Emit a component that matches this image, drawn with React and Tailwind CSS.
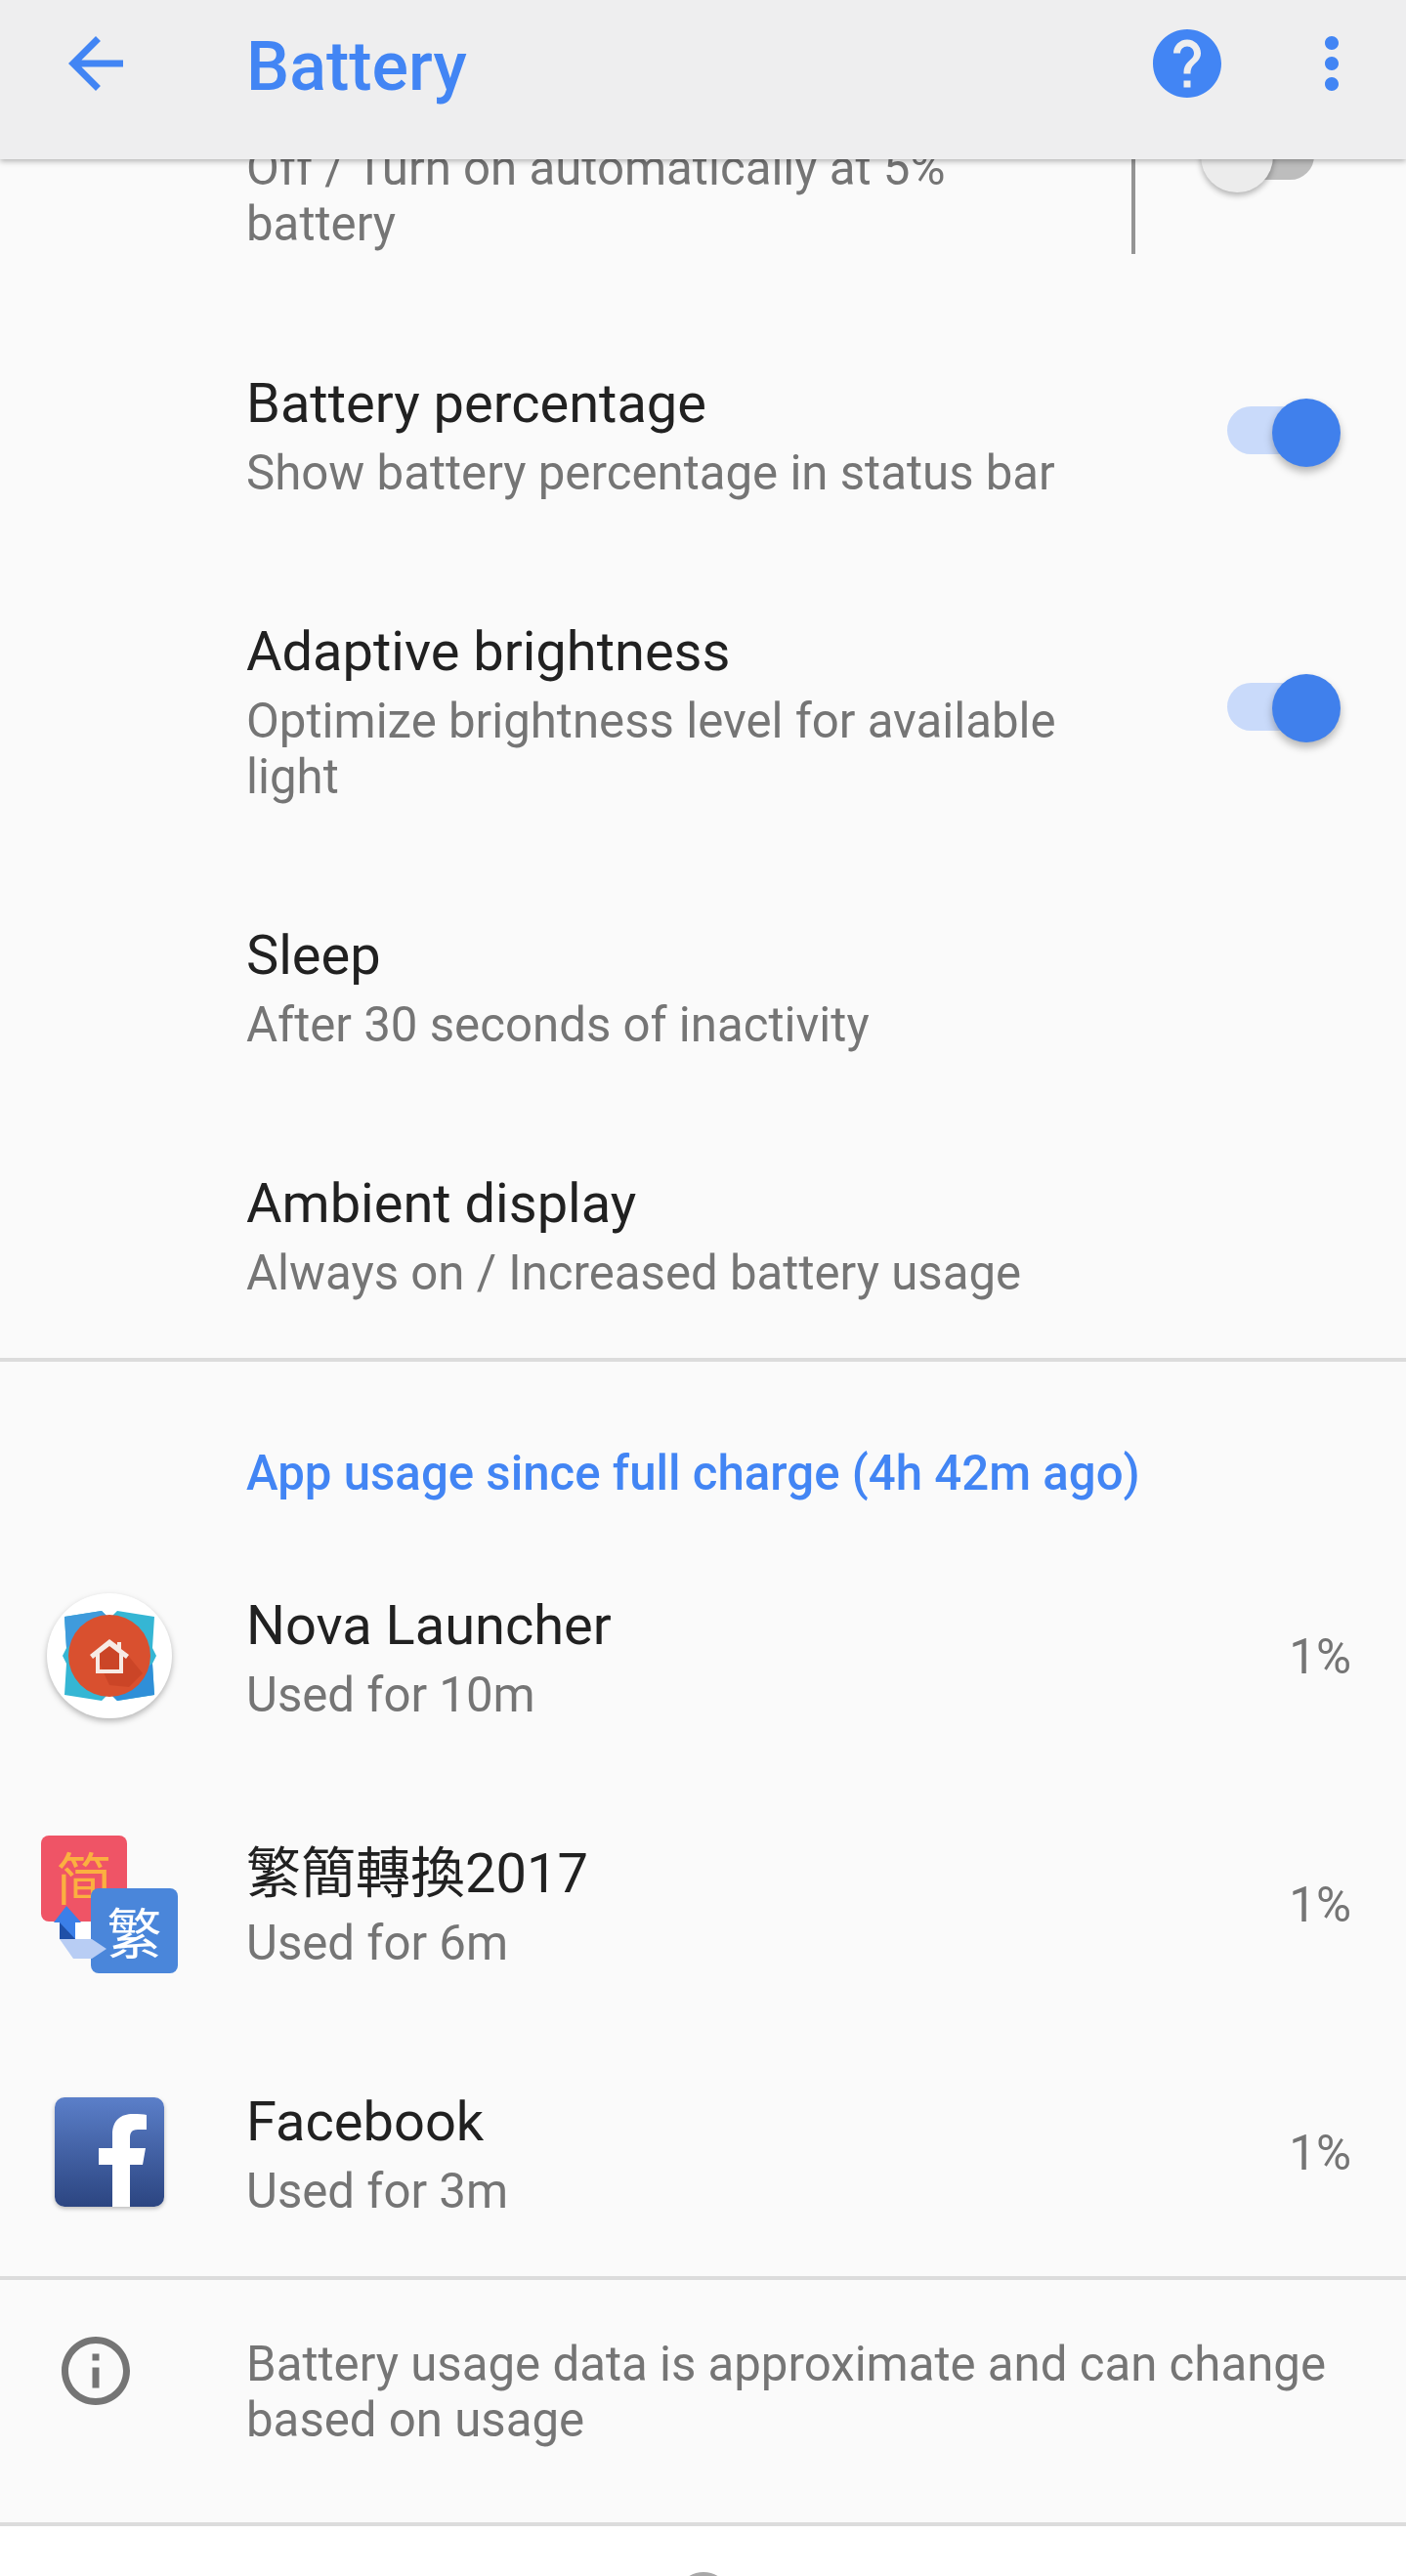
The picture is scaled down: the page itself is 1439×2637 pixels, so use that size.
const BLUE = "#4285f4";

function Toggle({ on }) {
  return (
    <div className={on ? "relative w-[116px] h-[70px] flex items-center mt-[-3px]" : "relative w-[116px] h-[70px] flex items-center"}>
      <div className={on ? "w-[95px] h-[49px] rounded-full bg-[#c9dafa]" : "w-[95px] h-[49px] rounded-full bg-[#bdbdbd] ml-[22px] mt-[2px]"} />
      <div
        className={
          on
            ? "absolute right-0 top-[2px] w-[70px] h-[70px] rounded-full bg-[#4080ec] shadow-[0_5px_9px_rgba(0,0,0,0.28)]"
            : "absolute left-0 top-0 w-[74px] h-[74px] rounded-full bg-[#ececec] shadow-[0_3px_6px_rgba(0,0,0,0.3)]"
        }
      />
    </div>
  );
}

function Row({ title, summary, right, icon, lines }) {
  return (
    <div className="flex items-center pt-[57px] pb-[55px]">
      <div className="w-[252px] shrink-0 flex justify-center pr-[28px] pt-[4px] h-0 items-center">{icon}</div>
      <div className="flex-1 min-w-0">
        {title && <div className="text-[56px] leading-[85px] text-[#212121]">{title}</div>}
        <div className="text-[49.2px] leading-[57px] text-[#757575]">
          {lines ? lines.map((l) => <div key={l}>{l}</div>) : summary}
        </div>
      </div>
      <div className="shrink-0 pr-[67px]">{right}</div>
    </div>
  );
}

function Percent() {
  return <div className="text-[49.2px] leading-[57px] text-[#757575] mr-[-11px] pt-[7px]">1%</div>;
}

function NovaIcon() {
  return (
    <svg width="140" height="140" viewBox="-4 -4 140 140" className="shrink-0 drop-shadow-[0_3px_3px_rgba(0,0,0,0.28)]">
      <circle cx="66" cy="66" r="64" fill="#fff" />
      <path d="M20 26 L58 20 L66 28 L74 20 L112 26 L110 58 L114 66 L110 74 L112 106 L74 112 L66 104 L58 112 L20 106 L22 74 L18 66 L22 58 Z" fill="#35b6d4" />
      <path d="M20 26 L58 20 L66 28 L22 58 Z" fill="#3f9bdc" />
      <path d="M112 106 L74 112 L66 104 L110 74 Z" fill="#2f8fd8" />
      <circle cx="66" cy="66" r="42" fill="#d9502f" />
      <path d="M50 62 L66 50 L82 62 L100 84 L86 98 L66 96 Z" fill="#cb4527" />
      <path d="M66 49 L46 65 L49 69 L66 56 L83 69 L86 65 L78 59 L78 52 L74 52 L74 55 Z" fill="#f7ebe5" />
      <path d="M52 66 V84 H80 V66 L76 63 V80 H56 V63 Z" fill="#f7ebe5" />
    </svg>
  );
}

function ConvertIcon() {
  return (
    <div className="relative w-[140px] h-[141px] shrink-0" style={{ fontFamily: '"Noto Sans CJK SC", sans-serif' }}>
      <div className="absolute left-0 top-0 w-[88px] h-[88px] rounded-[8px] bg-[#ef5466] flex items-center justify-center text-[#fbb040] text-[58px] leading-none pb-[6px]">简</div>
      <div className="absolute right-0 bottom-0 w-[89px] h-[87px] rounded-[8px] bg-[#4a86da] flex items-center justify-center text-white text-[56px] leading-none">繁</div>
      <svg className="absolute left-0 top-0" width="140" height="141" viewBox="0 0 140 141">
        <rect x="35" y="89" width="16" height="18" fill="#fff" />
        <path d="M26 72 L41 89 H35 V106 H19 V89 H13 Z" fill="#3b7fe8" />
        <path d="M19 89 V106 H35 Z" fill="#1f50a8" />
        <path d="M19 106 H52 L67 116 L52 126 H33 Z" fill="#b8cdf4" />
      </svg>
    </div>
  );
}

function FacebookIcon() {
  return (
    <div className="relative w-[112px] h-[112px] shrink-0 rounded-[10px] overflow-hidden bg-gradient-to-b from-[#5b7fc9] to-[#2c4581] shadow-[0_2px_4px_rgba(0,0,0,0.25)]">
      <svg className="absolute inset-0" width="112" height="112" viewBox="0 0 112 112">
        <path d="M59 112 V69 H45 V52 H59 V38 C59 23 68 17 80 17 C86 17 91 17 94 18 V33 H85 C78 33 77 37 77 42 V52 H93 L90 69 H77 V112 Z" fill="#fff" />
      </svg>
    </div>
  );
}

export default function App() {
  return (
    <div className="w-[1439px] h-[2637px] overflow-hidden bg-[#fafafa]" style={{ fontFamily: "Roboto, sans-serif" }}>
      <header className="relative z-10 h-[163px] bg-[#eeeeef] shadow-[0_2px_6px_rgba(0,0,0,0.3)] flex items-start pt-[23px]">
        <div className="w-[252px] shrink-0 pl-[56px]">
          <svg width="84" height="84" viewBox="0 0 24 24" fill={BLUE}>
            <path d="M20 11H7.83l5.59-5.59L12 4l-8 8 8 8 1.41-1.41L7.83 13H20v-2z" />
          </svg>
        </div>
        <div className="flex-1 text-[70px] leading-[84px] font-medium text-[#4285f4] mt-[3px]">Battery</div>
        <svg width="84" height="84" viewBox="0 0 24 24" fill={BLUE} className="mr-[64px]">
          <path d="M12 2C6.48 2 2 6.48 2 12s4.48 10 10 10 10-4.48 10-10S17.52 2 12 2zm1 17h-2v-2h2v2zm2.07-7.75l-.9.92C13.45 12.9 13 13.5 13 15h-2v-.5c0-1.1.45-2.1 1.17-2.83l1.24-1.26c.37-.36.59-.86.59-1.41 0-1.1-.9-2-2-2s-2 .9-2 2H8c0-2.21 1.79-4 4-4s4 1.79 4 4c0 .88-.36 1.68-.93 2.25z" />
        </svg>
        <svg width="84" height="84" viewBox="0 0 24 24" fill={BLUE} className="mr-[34px]">
          <path d="M12 8c1.1 0 2-.9 2-2s-.9-2-2-2-2 .9-2 2 .9 2 2 2zm0 2c-1.1 0-2 .9-2 2s.9 2 2 2 2-.9 2-2-.9-2-2-2zm0 6c-1.1 0-2 .9-2 2s.9 2 2 2 2-.9 2-2-.9-2-2-2z" />
        </svg>
      </header>

      <div className="mt-[-158px]">
        <div className="flex items-stretch h-[309px]">
          <div className="w-[252px] shrink-0" />
          <div className="w-[906px] shrink-0 pt-[139px] text-[49.2px] leading-[57px] text-[#757575]">
            <div>Off / Turn on automatically at 5%</div>
            <div>battery</div>
          </div>
          <div className="w-[4px] h-[255px] bg-[#949494]" />
          <div className="ml-[67px] mt-[118px]">
            <Toggle />
          </div>
        </div>

        <Row title="Battery percentage" summary="Show battery percentage in status bar" right={<Toggle on />} />
        <Row title="Adaptive brightness" lines={["Optimize brightness level for available", "light"]} right={<Toggle on />} />
        <Row title="Sleep" summary="After 30 seconds of inactivity" />
        <Row title="Ambient display" summary="Always on / Increased battery usage" />
      </div>

      <div className="h-[4px] mt-[3px] bg-[#dcdcdc]" />

      <div className="pl-[252px] pt-[86px] pb-[28px] text-[49.2px] leading-[57px] font-medium text-[#4285f4]">
        App usage since full charge (4h 42m ago)
      </div>

      <Row title="Nova Launcher" summary="Used for 10m" right={<Percent />} icon={<NovaIcon />} />
      <Row title={<span style={{ fontFamily: 'Roboto, "Noto Sans CJK TC", sans-serif' }}>繁簡轉換2017</span>} summary="Used for 6m" right={<Percent />} icon={<ConvertIcon />} />
      <Row title="Facebook" summary="Used for 3m" right={<Percent />} icon={<FacebookIcon />} />

      <div className="h-[4px] mt-[3px] bg-[#dcdcdc]" />

      <div className="flex h-[248px] pt-[58px]">
        <div className="w-[252px] shrink-0 pl-[56px] mt-[-7px]">
          <svg width="84" height="84" viewBox="0 0 24 24" fill="#757575">
            <path d="M11 7h2v2h-2zm0 4h2v6h-2zm1-9C6.48 2 2 6.48 2 12s4.48 10 10 10 10-4.48 10-10S17.52 2 12 2zm0 18c-4.41 0-8-3.59-8-8s3.59-8 8-8 8 3.59 8 8-3.59 8-8 8z" />
          </svg>
        </div>
        <div className="flex-1 text-[49.2px] leading-[57px] text-[#757575]">
          <div>Battery usage data is approximate and can change</div>
          <div>based on usage</div>
        </div>
      </div>

      <div className="h-[4px] bg-[#dcdcdc]" />

      <div className="h-[52px] bg-white flex justify-center pt-[47px] overflow-hidden">
        <div className="w-[56px] h-[56px] shrink-0 rounded-full border-[8px] border-[#a8a8a8]" />
      </div>
    </div>
  );
}
